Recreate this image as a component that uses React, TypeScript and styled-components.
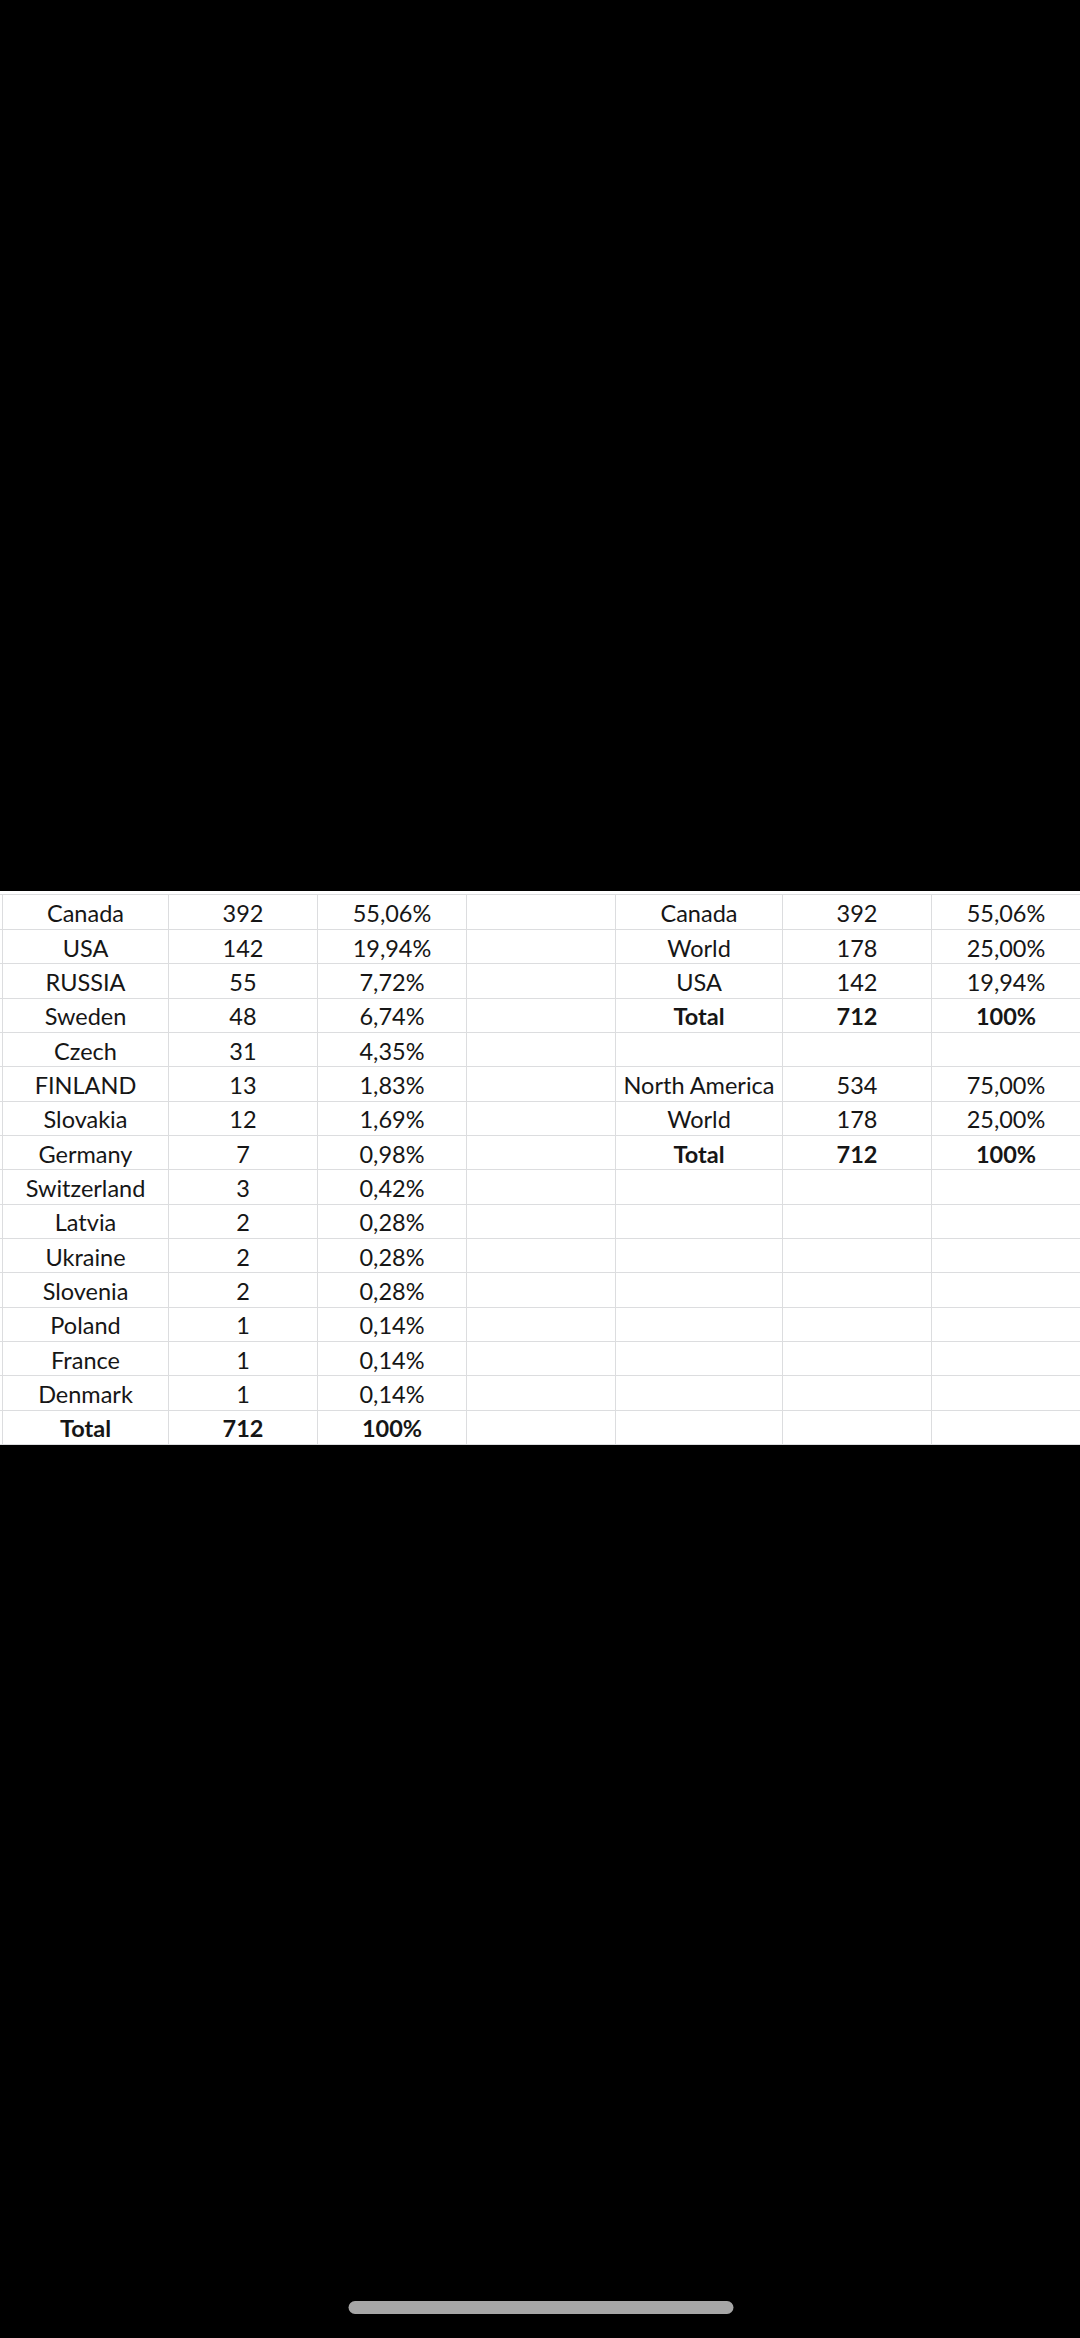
import styled, { createGlobalStyle } from 'styled-components'

type Row = [string, string, string, boolean?]

const left: Row[] = [
  ['Canada', '392', '55,06%'],
  ['USA', '142', '19,94%'],
  ['RUSSIA', '55', '7,72%'],
  ['Sweden', '48', '6,74%'],
  ['Czech', '31', '4,35%'],
  ['FINLAND', '13', '1,83%'],
  ['Slovakia', '12', '1,69%'],
  ['Germany', '7', '0,98%'],
  ['Switzerland', '3', '0,42%'],
  ['Latvia', '2', '0,28%'],
  ['Ukraine', '2', '0,28%'],
  ['Slovenia', '2', '0,28%'],
  ['Poland', '1', '0,14%'],
  ['France', '1', '0,14%'],
  ['Denmark', '1', '0,14%'],
  ['Total', '712', '100%', true]
]

const right: Row[] = [
  ['Canada', '392', '55,06%'],
  ['World', '178', '25,00%'],
  ['USA', '142', '19,94%'],
  ['Total', '712', '100%', true],
  ['', '', ''],
  ['North America', '534', '75,00%'],
  ['World', '178', '25,00%'],
  ['Total', '712', '100%', true]
]

const GlobalStyle = createGlobalStyle`
  html, body {
    margin: 0;
    padding: 0;
    background: #000;
  }
  body {
    font-family: Lato, 'Liberation Sans', sans-serif;
  }
`

const Screen = styled.div`
  width: 1080px;
  height: 2338px;
  background: #000;
  display: flex;
  flex-direction: column;
  overflow: hidden;
`

const Sheet = styled.div`
  margin-top: 891px;
  padding-top: 3px;
  background: #fff;
`

const Grid = styled.div`
  display: grid;
  grid-template-columns: 2px 166px 149px 149px 149px 167px 149px 1fr;
  grid-template-rows: 35px repeat(15, 34.33px);
  border-top: 1px solid #dcdddf;
`

const Stub = styled.div`
  border-bottom: 1px solid #dcdddf;
`

const Cell = styled.div<{ $bold?: boolean }>`
  display: flex;
  align-items: center;
  justify-content: center;
  padding-top: 2px;
  border-left: 1px solid #dcdddf;
  border-bottom: 1px solid #dcdddf;
  font-size: 23.5px;
  font-weight: ${(p) => (p.$bold ? 700 : 400)};
  color: #161616;
  white-space: nowrap;
  overflow: hidden;
`

const HomeBar = styled.div`
  margin: auto auto 24px;
  width: 385px;
  height: 13px;
  border-radius: 7px;
  background: #a6a6a6;
  transform: translateX(0.5px);
`

export default function App() {
  return (
    <>
      <GlobalStyle />
      <Screen>
        <Sheet>
          <Grid>
            {left.map((row, i) => {
              const r = right[i] ?? ['', '', '']
              return [
                <Stub key={`s${i}`} />,
                <Cell key={`a${i}`} $bold={row[3]}>{row[0]}</Cell>,
                <Cell key={`b${i}`} $bold={row[3]}>{row[1]}</Cell>,
                <Cell key={`c${i}`} $bold={row[3]}>{row[2]}</Cell>,
                <Cell key={`d${i}`} />,
                <Cell key={`e${i}`} $bold={r[3]}>{r[0]}</Cell>,
                <Cell key={`f${i}`} $bold={r[3]}>{r[1]}</Cell>,
                <Cell key={`g${i}`} $bold={r[3]}>{r[2]}</Cell>
              ]
            })}
          </Grid>
        </Sheet>
        <HomeBar />
      </Screen>
    </>
  )
}
